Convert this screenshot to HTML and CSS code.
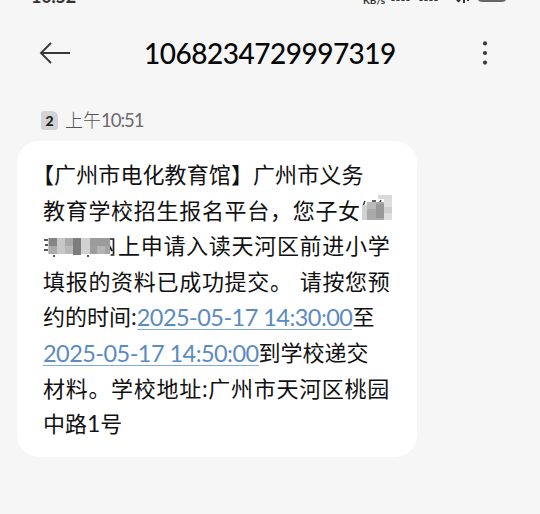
FILE: index.html
```html
<!DOCTYPE html>
<html lang="zh-CN">
<head>
<meta charset="utf-8">
<title>短信</title>
<link rel="stylesheet" href="styles.css">
</head>
<body>
<div class="status">
  <span class="clock">10:52</span>
  <div class="status-right">
    <span class="rate">KB/s</span>
    <svg class="signals" width="152" height="8" viewBox="0 0 152 8">
      <path d="M5 0v1M10 0v1M15 0v1M20 0v1M33 0v1M38 0v1M43 0v1M48 0v1" stroke="#333" stroke-width="3.2"/>
      <path d="M68 0l2.5 2.5L73 0zM75 0h2v3h-2zM79 0h2v1h-2z" fill="#333"/>
      <path d="M90 0h28q-1 2-4 2H94q-3 0-4-2z" fill="#666"/>
    </svg>
  </div>
</div>
<header class="bar">
  <svg class="back" width="32" height="24" viewBox="0 0 32 24"><path d="M31 12H2M12 2L2 12l10 10" fill="none" stroke="#383838" stroke-width="1.9"/></svg>
  <h1 class="number">1068234729997319</h1>
  <svg class="more" width="6" height="24" viewBox="0 0 6 24" fill="#3c3c3c"><circle cx="3" cy="2.4" r="2.1"/><circle cx="3" cy="12" r="2.1"/><circle cx="3" cy="21.6" r="2.1"/></svg>
</header>
<main class="thread">
  <div class="meta"><span class="sim">2</span><span class="time">上午<span class="time-digits">10:51</span></span></div>
  <div class="bubble">
    <p class="line first">【广州市电化教育馆】广州市义务</p>
    <p class="line wide">教育学校招生报名平台，您子女<svg class="mask-a" width="31" height="28" viewBox="0 0 31 28">
      <path d="M3 6l-2 5M10 6h4M19 5l-2 4" stroke="#333" stroke-width="1.4"/>
      <path d="M16 0h14v4H16z" fill="#d9d9d9"/><path d="M22 4h8v21h-8z" fill="#dedede"/>
      <path d="M0 10h6v15H0z" fill="#d2d2d2"/><path d="M5 7h17v18H5z" fill="#aaa"/>
      <path d="M14 9h8v14h-8z" fill="#989898"/><path d="M5 7h9v7H5z" fill="#bbb"/><path d="M22 12h8v6h-8z" fill="#cfcfcf"/>
    </svg></p>
    <p class="line wide"><svg class="mask-b" width="75" height="26" viewBox="0 0 75 26">
      <path d="M1 7h5M2 12h4M1 17h5M64 6h6.5v16h-3M65 10l4 8M10 23h2M44 23h2" fill="none" stroke="#222" stroke-width="1.7"/>
      <path d="M5 5h62v16H5z" fill="#c7c7c7"/><path d="M6 5h8v8H6z" fill="#858585"/><path d="M6 13h8v8H6z" fill="#aaa"/>
      <path d="M22 5h8v8h-8z" fill="#aaa"/><path d="M22 13h8v8h-8z" fill="#b8b8b8"/><path d="M30 5h8v17h-8z" fill="#7d7d7d"/>
      <path d="M38 5h9v16h-9z" fill="#d1d1d1"/><path d="M47 5h20v8H47z" fill="#9b9b9b"/><path d="M47 13h7v8h-7z" fill="#9d9d9d"/><path d="M54 13h8v8h-8z" fill="#b4b4b4"/><path d="M62 13h5v8h-5z" fill="#a4a4a4"/>
    </svg>上申请入读天河区前进小学</p>
    <p class="line wide">填报的资料已成功提交。<span class="gap"></span>请按您预</p>
    <p class="line">约的时间<span class="latin">:</span><a class="stamp">2025-05-17 14:30:00</a>至</p>
    <p class="line"><a class="stamp">2025-05-17 14:50:00</a>到学校递交</p>
    <p class="line wide">材料。学校地址<span class="latin">:</span>广州市天河区桃园</p>
    <p class="line">中路<span class="latin">1</span>号</p>
  </div>
</main>
</body>
</html>
```
FILE: styles.css
```css
* { box-sizing: border-box; margin: 0; padding: 0; }
body {
  width: 540px;
  height: 514px;
  overflow: hidden;
  background: #f6f6f6;
  color: #111;
  font-family: Lato, "Noto Sans CJK SC", sans-serif;
}
.status {
  display: flex;
  justify-content: space-between;
  height: 20px;
  padding-left: 31px;
  overflow: hidden;
  color: #333;
}
.clock { margin-top: -16px; font-size: 18px; line-height: 24px; font-weight: 700; letter-spacing: -0.3px; }
.status-right { display: flex; }
.rate { margin-top: -6px; font-size: 10px; line-height: 12px; font-weight: 700; width: 25px; }
.bar {
  display: flex;
  align-items: center;
  height: 66px;
  padding: 0 52px 0 39px;
}
.number {
  flex: 1;
  padding-left: 73px;
  font-size: 28px;
  font-weight: 500;
  line-height: 34px;
  letter-spacing: -0.5px;
  color: #080808;
}
.thread { padding: 24px 16px 0; }
.meta { display: flex; align-items: center; height: 20px; padding-left: 25px; }
.sim {
  width: 17px;
  height: 19px;
  border-radius: 3px;
  border-top-right-radius: 6px;
  background: #d3d3d3;
  color: #222;
  font-size: 14px;
  font-weight: 900;
  line-height: 19px;
  text-align: center;
}
.time { margin-left: 7px; font-size: 18px; line-height: 20px; font-weight: 300; color: #555; white-space: nowrap; }
.time-digits { font-size: 18.5px; font-weight: 400; letter-spacing: -1px; color: #6a6a6a; }
.bubble {
  width: 400px;
  height: 316px;
  margin: 11px 0 0 1px;
  padding: 16px 0 0 26px;
  border-radius: 22px;
  background: #fff;
}
.line {
  display: flex;
  align-items: center;
  height: 35.6px;
  font-size: 22px;
  line-height: 35.6px;
  white-space: nowrap;
}
.line svg { flex: none; }
.first { margin-left: -11px; letter-spacing: 0.1px; }
.wide { letter-spacing: 0.7px; }
.latin { font-size: 23px; }
.gap { width: 7px; }
.stamp {
  height: 26px;
  border-bottom: 1.5px solid #7fabd8;
  color: #5b8ac4;
  font-size: 23.5px;
  line-height: 26px;
  letter-spacing: -0.55px;
}
.mask-a { margin: 0 0 2px 1px; }
```
